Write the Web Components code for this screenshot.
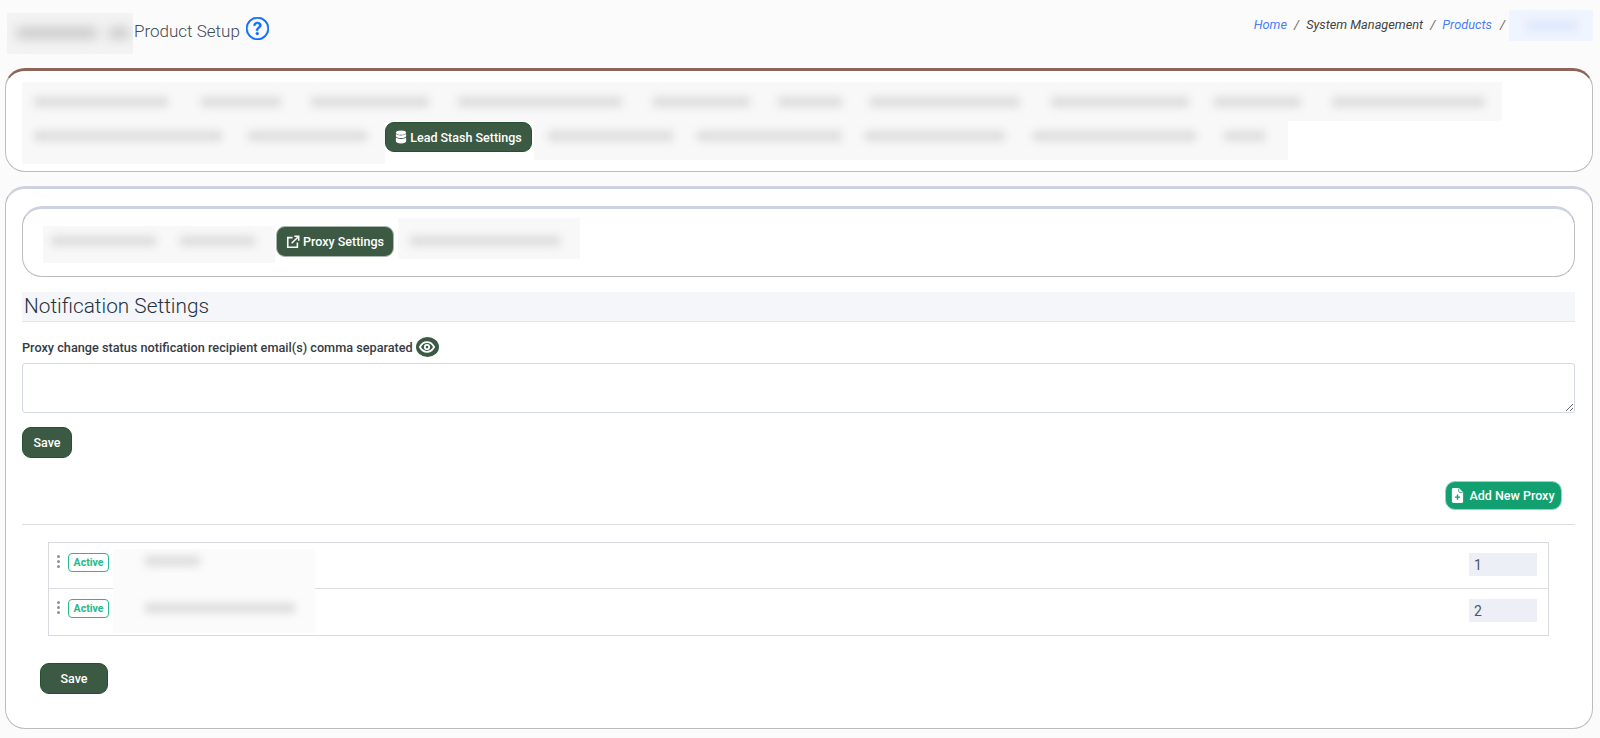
<!DOCTYPE html>
<html>
<head>
<meta charset="utf-8">
<title>Product Setup</title>
<style>
    html, body { margin: 0; background: #fbfbfb; }
    body { font-family: Roboto, "Liberation Sans", sans-serif; color: #333; }
    #page { padding: 0 7px 0 5px; }
</style>
</head>
<body>
<setup-page id="page"></setup-page>

<script>
const ICONS = {
    database: `<svg viewBox="0 0 14 16" width="12" height="14" fill="#fff"><path d="M7 .5C3.400.5 1 1.500 1 2.900S3.400 5.300 7 5.300s6-1 6-2.400S10.600.5 7 .5z"/><path d="M1 4.600v2.300c0 1.400 2.400 2.400 6 2.400s6-1 6-2.400V4.600c-1.200 1-3.400 1.600-6 1.600s-4.800-.6-6-1.600z"/><path d="M1 8.600v4.500c0 1.400 2.400 2.400 6 2.400s6-1 6-2.400V8.600c-1.200 1-3.400 1.600-6 1.600s-4.800-.6-6-1.600z"/></svg>`,
    external: `<svg viewBox="0 0 16 16" width="14" height="14" fill="none" stroke="#fff" stroke-width="1.800"><path d="M7.500 3H2v11h11V8.500"/><path d="M6.500 9.500L14 2"/><path d="M9.500 1.500h5v5"/></svg>`,
    eye: `<svg viewBox="0 0 16 16" width="16" height="16" fill="none" stroke="#fff" stroke-width="1.800"><path d="M.9 8S3.500 3.200 8 3.200 15.100 8 15.100 8 12.500 12.800 8 12.800.9 8 .9 8z"/><circle cx="8" cy="8" r="2.200"/></svg>`,
    filePlus: `<svg viewBox="0 0 16 16" width="15" height="15"><path fill="#fff" d="M3.500 0h6L14 4.500V14.500A1.500 1.500 0 0 1 12.500 16h-9A1.500 1.500 0 0 1 2 14.500v-13A1.500 1.500 0 0 1 3.500 0z"/><path fill="none" stroke="#12a070" stroke-width=".9" d="M9.300.6v3.300c0 .4.300.7.700.7h3.400"/><path fill="none" stroke="#12a070" stroke-width="1.500" d="M8 7v5.400M5.300 9.700h5.400"/></svg>`,
    help: `<svg viewBox="0 0 16 16" width="23" height="23" fill="#0d6efd" stroke="#0d6efd" stroke-width=".35"><path d="M8 15A7 7 0 1 1 8 1a7 7 0 0 1 0 14zm0 1A8 8 0 1 0 8 0a8 8 0 0 0 0 16z"/><path d="M5.255 5.786a.237.237 0 0 0 .241.247h.825c.138 0 .248-.113.266-.25.09-.656.54-1.134 1.342-1.134.686 0 1.314.343 1.314 1.168 0 .635-.374.927-.965 1.371-.673.489-1.206 1.06-1.168 1.987l.003.217a.25.25 0 0 0 .25.246h.811a.25.25 0 0 0 .25-.25v-.105c0-.718.273-.927 1.01-1.486.609-.463 1.244-.977 1.244-2.056 0-1.511-1.276-2.241-2.673-2.241-1.267 0-2.655.59-2.750 2.286zm1.557 5.763c0 .533.425.927 1.010.927.609 0 1.028-.394 1.028-.927 0-.552-.420-.940-1.029-.940-.584 0-1.009.388-1.009.940z"/></svg>`
};

// redacted stretches of the screenshot: bars="gap:width,gap:width"
class BlurStrip extends HTMLElement {
    connectedCallback() {
        const w = this.getAttribute("w");
        const h = this.getAttribute("h");
        const mid = this.getAttribute("mid") || h / 2;
        const bg = this.getAttribute("bg") || "#f8f8f8";
        const ink = this.getAttribute("ink") || "#dcdcdc";
        const blur = this.getAttribute("blur") || 4;
        const bars = (this.getAttribute("bars") || "").split(",").map(b => {
            const [gap, width] = b.split(":");
            return `<i style="margin-left:${gap}px;width:${width}px"></i>`;
        }).join("");
        this.attachShadow({mode: "open"}).innerHTML = `
        <style>
            :host { display: block; flex: none; width: ${w}px; height: ${h}px; background: ${bg}; overflow: hidden; }
            .bars { display: flex; padding-top: ${mid - 5}px; }
            i { display: block; flex: none; height: 10px; background: ${ink}; filter: blur(${blur}px); }
        </style>
        <div class="bars">${bars}</div>`;
    }
}
customElements.define("blur-strip", BlurStrip);

class ActionButton extends HTMLElement {
    connectedCallback() {
        const icon = this.getAttribute("icon");
        this.attachShadow({mode: "open"}).innerHTML = `
        <style>
            :host { display: inline-flex; flex: none; box-sizing: border-box; align-items: center; justify-content: center; gap: 3px;
                height: 31px; background: #3c5a43; color: #fff; border: 1px solid #a9b8ad; border-radius: 9px;
                font: 500 12.500px Roboto, sans-serif; }
            :host([dark]) { border-color: #24502f; }
            :host([add]) { background: #12a070; border-color: #8ed6bd; height: 29px; border-radius: 10px; gap: 4px; padding-right: 2px; }
            svg { display: block; }
        </style>
        ${icon ? ICONS[icon] : ""}<slot></slot>`;
    }
}
customElements.define("action-button", ActionButton);

class PanelCard extends HTMLElement {
    connectedCallback() {
        this.attachShadow({mode: "open"}).innerHTML = `
        <style>
            :host { display: block; box-sizing: border-box; background: #fff; border: 1px solid #bcbcbc; border-top: 3px solid var(--top, #ccd2df); border-radius: 20px; }
        </style>
        <slot></slot>`;
    }
}
customElements.define("panel-card", PanelCard);

class PageHeader extends HTMLElement {
    connectedCallback() {
        this.attachShadow({mode: "open"}).innerHTML = `
        <style>
            :host { display: flex; height: 68px; align-items: flex-start; font-family: Roboto, sans-serif; }
            .title { display: flex; align-items: flex-start; padding: 13px 0 0 1px; }
            h1 { margin: 8px 6px 0 1px; font: 300 17px/20px Roboto, sans-serif; color: #444b55; }
            svg { display: block; margin-top: 4px; }
            nav { margin-left: auto; display: flex; align-items: flex-start; padding-top: 10px; font: italic 400 12.750px Roboto, sans-serif; color: #444; }
            nav span { margin-top: 7px; }
            nav a { margin-top: 7px; color: #4a7dfb; }
            .sep { margin: 7px 7px 0; color: #666; }
            .last { margin: 7px 3px 0 8px; }
            blur-strip { margin-left: 1px; }
        </style>
        <div class="title">
            <blur-strip w="126" h="41" mid="20" blur="6" bars="10:80,12:20" ink="#c4c4c4" bg="#f3f3f3"></blur-strip>
            <h1>Product Setup</h1>
            ${ICONS.help}
        </div>
        <nav>
            <a>Home</a><span class="sep">/</span>
            <span>System Management</span><span class="sep">/</span>
            <a>Products</a><span class="sep last">/</span>
            <blur-strip w="84" h="31" mid="16" bars="18:50" ink="#dde7fc" bg="#f0f4fe"></blur-strip>
        </nav>`;
    }
}
customElements.define("page-header", PageHeader);

class ModuleTabs extends HTMLElement {
    connectedCallback() {
        this.attachShadow({mode: "open"}).innerHTML = `
        <style>
            :host { display: block; height: 100px; box-sizing: border-box; padding: 11px 0 0 16px; }
            .row { display: flex; align-items: flex-start; }
            action-button { width: 147px; height: 30px; margin: 1px 2px 0 0; }
        </style>
        <div class="row">
            <blur-strip w="1480" h="39" bars="12:134,33:80,30:118,29:164,31:97,28:64,28:150,31:138,25:87,31:153"></blur-strip>
        </div>
        <div class="row">
            <blur-strip w="363" h="43" mid="15" bars="12:188,26:119"></blur-strip>
            <action-button icon="database" dark>Lead Stash Settings</action-button>
            <blur-strip w="754" h="39" mid="15" bars="14:125,24:145,23:140,28:163,28:41"></blur-strip>
        </div>`;
    }
}
customElements.define("module-tabs", ModuleTabs);

class SubTabs extends HTMLElement {
    connectedCallback() {
        this.attachShadow({mode: "open"}).innerHTML = `
        <style>
            :host { display: flex; align-items: flex-start; box-sizing: border-box; height: 71px; padding: 9px 0 0 20px;
                background: #fff; border: 1px solid #bcbcbc; border-top: 3px solid #ccd2df; border-radius: 20px; }
            .a { margin-top: 8px; }
            action-button { width: 118px; margin: 8px 4px 0 1px; }
        </style>
        <blur-strip class="a" w="232" h="37" mid="15" bars="8:105,24:75"></blur-strip>
        <action-button icon="external">Proxy Settings</action-button>
        <blur-strip w="182" h="41" mid="23" bars="12:150"></blur-strip>`;
    }
}
customElements.define("sub-tabs", SubTabs);

class SectionTitle extends HTMLElement {
    connectedCallback() {
        this.attachShadow({mode: "open"}).innerHTML = `
        <style>
            :host { display: block; box-sizing: border-box; height: 30px; padding-left: 2px; background: #f4f6fa; border-bottom: 1px solid #e6e6e6;
                font: 300 20.800px/28px Roboto, sans-serif; color: #26323f; }
        </style>
        <slot></slot>`;
    }
}
customElements.define("section-title", SectionTitle);

class EmailField extends HTMLElement {
    connectedCallback() {
        this.attachShadow({mode: "open"}).innerHTML = `
        <style>
            :host { display: block; }
            label { display: flex; align-items: center; gap: 3px; height: 20px; font: 500 12.700px Roboto, sans-serif; color: #363c44; }
            .eye { display: flex; align-items: center; justify-content: center; width: 23px; height: 20px; border-radius: 50%; background: #3c5a43; }
            textarea { display: block; box-sizing: border-box; width: 100%; height: 50px; margin: 6px 0 14px; background: #fff; border: 1px solid #d6dae3; border-radius: 3px; outline: 0; }
            action-button { width: 50px; }
        </style>
        <label>Proxy change status notification recipient email(s) comma separated <span class="eye">${ICONS.eye}</span></label>
        <textarea></textarea>
        <action-button dark>Save</action-button>`;
    }
}
customElements.define("email-field", EmailField);

class ProxyRow extends HTMLElement {
    connectedCallback() {
        this.attachShadow({mode: "open"}).innerHTML = `
        <style>
            :host { display: flex; align-items: flex-start; box-sizing: border-box; height: 46px; padding: 10px 11px 0 7px; border-top: 1px solid #dcdde2; }
            :host(:first-child) { border-top: 0; height: 45px; }
            .dots { display: flex; flex-direction: column; gap: 2px; width: 3px; margin: 2px 8px 0 1px; }
            .dots i { display: block; width: 3px; height: 3px; border-radius: 50%; background: #8a919d; }
            .badge { box-sizing: border-box; width: 41px; height: 19px; border: 1px solid #27b98a; border-radius: 4px; text-align: center;
                font: 700 10.500px/17px Roboto, sans-serif; color: #25b98b; }
            input { box-sizing: border-box; width: 68px; height: 23px; margin-left: auto; padding: 0 5px; background: #eceff5; border: 0; border-radius: 0;
                font: 400 14px Roboto, sans-serif; color: #4b5563; outline: 0; }
        </style>
        <span class="dots"><i></i><i></i><i></i></span>
        <span class="badge">Active</span>
        <input value="${this.getAttribute("order")}">`;
    }
}
customElements.define("proxy-row", ProxyRow);

class ProxyList extends HTMLElement {
    connectedCallback() {
        this.attachShadow({mode: "open"}).innerHTML = `
        <style>
            :host { display: block; position: relative; box-sizing: border-box; height: 94px; border: 1px solid #d9dae0; }
            /* redacted proxy names sit over the row divider */
            blur-strip { position: absolute; left: 64px; top: 6px; }
        </style>
        <slot></slot>
        <blur-strip w="202" h="84" mid="12" bg="#fbfbfb" bars="32:55"></blur-strip>
        <blur-strip style="top:50px" w="202" h="40" mid="15" bg="transparent" bars="32:150"></blur-strip>`;
    }
}
customElements.define("proxy-list", ProxyList);

class SetupPage extends HTMLElement {
    connectedCallback() {
        this.attachShadow({mode: "open"}).innerHTML = `
        <style>
            :host { display: block; }
            .top { --top: #8d6558; height: 104px; }
            .main { margin-top: 14px; height: 543px; padding: 17px 17px 0 16px; }
            section-title { margin-top: 15px; }
            email-field { margin-top: 15px; }
            .add { display: flex; justify-content: flex-end; margin-top: 23px; padding-right: 13px; }
            .add action-button { width: 117px; }
            hr { margin: 14px 0 0; border: 0; border-top: 1px solid #dedede; }
            proxy-list { margin: 17px 26px 0; }
            .save { margin: 27px 0 0 18px; width: 68px; }
        </style>
        <page-header></page-header>
        <panel-card class="top"><module-tabs></module-tabs></panel-card>
        <panel-card class="main">
            <sub-tabs></sub-tabs>
            <section-title>Notification Settings</section-title>
            <email-field></email-field>
            <div class="add"><action-button add icon="filePlus">Add New Proxy</action-button></div>
            <hr>
            <proxy-list>
                <proxy-row order="1"></proxy-row>
                <proxy-row order="2"></proxy-row>
            </proxy-list>
            <action-button class="save" dark>Save</action-button>
        </panel-card>`;
    }
}
customElements.define("setup-page", SetupPage);
</script>
</body>
</html>
